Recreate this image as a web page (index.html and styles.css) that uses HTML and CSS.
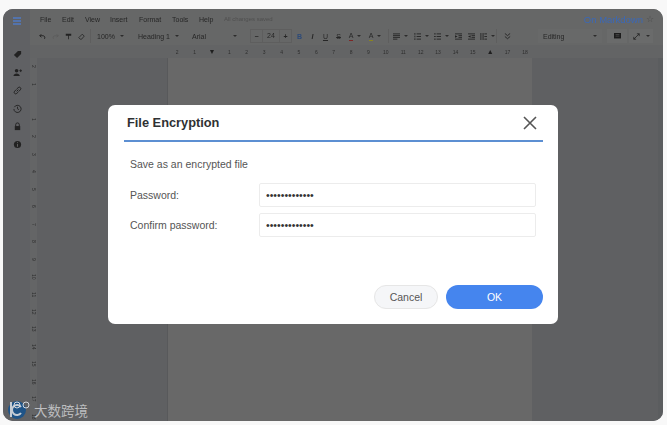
FILE: index.html
```html
<!DOCTYPE html>
<html lang="en">
<head>
    <meta charset="UTF-8">
    <meta name="viewport" content="width=device-width, initial-scale=1.0">
    <title>On Markdown - File Encryption</title>
    <link rel="stylesheet" href="styles.css">
</head>
<body>
    <div class="window">
        <div class="editor">
            <aside class="sidebar">
                <svg class="side-menu" width="10" height="8" viewBox="0 0 10 8"><path d="M1 1h8M1 4h8M1 7h8" stroke="#4f7ac4" stroke-width="1.400"/></svg>
                <div class="side-icons">
                    <svg viewBox="0 0 10 10"><path d="M1 5.500 5.500 1H9v3.500L4.500 9z" fill="#222"/></svg>
                    <svg viewBox="0 0 10 10"><circle cx="4" cy="3" r="2" fill="#222"/><path d="M0.500 9c0-4 7-4 7 0z" fill="#222"/><path d="M7 3h3M8.500 1.500v3" stroke="#222"/></svg>
                    <svg viewBox="0 0 10 10"><path d="M4 6 6 4M3.500 4 1.800 5.800a1.600 1.600 0 0 0 2.400 2.400L6 6.500M6.500 6l1.700-1.800a1.600 1.600 0 0 0-2.400-2.400L4 3.500" fill="none" stroke="#222" stroke-width="1.100"/></svg>
                    <svg viewBox="0 0 10 10"><path d="M1.500 3.500A4 4 0 1 1 1 5.500M5 3v2.300L6.600 6.300" fill="none" stroke="#222" stroke-width="1"/></svg>
                    <svg viewBox="0 0 10 10"><path d="M3 4.500V3a2 2 0 0 1 4 0v1.500" fill="none" stroke="#222" stroke-width="1.100"/><rect x="2" y="4.500" width="6" height="4.500" fill="#222"/></svg>
                    <svg viewBox="0 0 10 10"><circle cx="5" cy="5" r="4" fill="#222"/><path d="M5 4.500v3M5 2.500v1" stroke="#666"/></svg>
                </div>
            </aside>

            <div class="workspace">
                <header class="topbar">
                    <nav class="menubar">
                        <span class="menu-file">File</span>
                        <span class="menu-edit">Edit</span>
                        <span class="menu-view">View</span>
                        <span class="menu-insert">Insert</span>
                        <span class="menu-format">Format</span>
                        <span class="menu-tools">Tools</span>
                        <span class="menu-help">Help</span>
                        <span class="saved">All changes saved</span>
                        <span class="doc-name">On Markdown</span>
                        <span class="star">☆</span>
                    </nav>
                    <div class="toolbar">
                        <span class="tool w12"><svg viewBox="0 0 9 8"><path d="M3 1 1 3l2 2M1 3h4.500a2.500 2.500 0 0 1 1.500 4" fill="none" stroke="#222" stroke-width="1.200"/></svg></span>
                        <span class="tool w14"><svg viewBox="0 0 9 8"><path d="M6 1l2 2-2 2M8 3H3.500A2.500 2.500 0 0 0 2 7" fill="none" stroke="#5c5c5c" stroke-width="1"/></svg></span>
                        <span class="tool w12"><svg viewBox="0 0 9 9"><path d="M1 1h7v2.500H1zM4 3.500h1V8H4z" fill="#222"/></svg></span>
                        <span class="tool w14"><svg viewBox="0 0 9 9"><path d="M1 6 5.500 1.500 8 4 4.500 8H3z" fill="none" stroke="#222"/></svg></span>
                        <span class="tool-sep sep-a"></span>
                        <span class="select sel-zoom">100%<i class="caret"></i></span>
                        <span class="select sel-style">Heading 1<i class="caret"></i></span>
                        <span class="select sel-font">Arial<i class="caret"></i></span>
                        <span class="size-box"><b>−</b><em>24</em><b>+</b></span>
                        <span class="tool w13 bold">B</span>
                        <span class="tool w13 italic">I</span>
                        <span class="tool w13 under">U</span>
                        <span class="tool w13 strike">S</span>
                        <span class="tool w20"><span class="letter red">A</span><i class="caret"></i></span>
                        <span class="tool w20"><span class="letter yellow">A</span><i class="caret"></i></span>
                        <span class="tool-sep sep-b"></span>
                        <span class="tool w21"><svg viewBox="0 0 8 8"><path d="M0 1h8M0 3h8M0 5h8M0 7h5" stroke="#222"/></svg><i class="caret"></i></span>
                        <span class="tool w20"><svg viewBox="0 0 8 8"><path d="M3 1h5M3 4h5M3 7h5M1 0v2M1 3v2M1 6v2" stroke="#222"/></svg><i class="caret"></i></span>
                        <span class="tool w20"><svg viewBox="0 0 8 8"><path d="M3 1h5M3 4h5M3 7h5M0 1h2M0 4h2M0 7h2" stroke="#222"/></svg><i class="caret"></i></span>
                        <span class="tool w14"><svg viewBox="0 0 8 8"><path d="M0 1h8M0 7h8M4 3h4M4 5h4" stroke="#222"/><path d="M0 2.500 3 4 0 5.500z" fill="#222"/></svg></span>
                        <span class="tool w12"><svg viewBox="0 0 8 8"><path d="M0 1h8M0 7h8M4 3h4M4 5h4" stroke="#222"/><path d="M3 2.500 0 4l3 1.500z" fill="#222"/></svg></span>
                        <span class="tool w20"><svg viewBox="0 0 8 8"><path d="M1 0v8M3.500 0v8M5 1h3M5 4h3M5 7h3" stroke="#222"/></svg><i class="caret"></i></span>
                        <span class="tool-sep sep-c"></span>
                        <span class="tool w20"><svg viewBox="0 0 8 8"><path d="M1 0.500l3 2.500 3-2.500M1 4l3 2.500L7 4" fill="none" stroke="#222"/></svg></span>
                        <span class="select sel-mode">Editing<i class="caret"></i></span>
                        <span class="tool comment-btn"><svg viewBox="0 0 9 9"><path d="M0 0h9v7H0z" fill="#1c1c1c"/><path d="M2 2h5M2 4h5" stroke="#666" stroke-width=".7"/></svg></span>
                        <span class="tool expand-btn"><svg viewBox="0 0 9 9"><path d="M1 8 8 1M5 1h3v3M1 5v3h3" fill="none" stroke="#222"/></svg><i class="caret"></i></span>
                    </div>
                </header>

                <div class="ruler-top" id="rulerTop">
                    <span>2</span><span>1</span><span class="ruler-mark">▼</span><span>1</span><span>2</span><span>3</span><span>4</span><span>5</span><span>6</span><span>7</span><span>8</span><span>9</span><span>10</span><span>11</span><span>12</span><span>13</span><span>14</span><span>15</span><span class="ruler-end">▲</span><span>17</span><span>18</span>
                </div>

                <div class="canvas">
                    <div class="ruler-left">
                        <span>2</span><span>1</span><span></span><span>1</span><span>2</span><span>3</span><span>4</span><span>5</span><span>6</span><span>7</span><span>8</span><span>9</span><span>10</span><span>11</span><span>12</span><span>13</span><span>14</span><span>15</span><span>16</span><span>17</span><span>18</span>
                    </div>
                    <div class="page-area">
                        <div class="page"></div>
                    </div>
                    <div class="scrollbar"></div>
                </div>
            </div>
        </div>

        <div class="dialog">
            <div class="dialog-head">
                <h1>File Encryption</h1>
                <button class="close-btn" aria-label="Close">
                    <svg width="14" height="14" viewBox="0 0 14 14"><path d="M1 1l12 12M13 1 1 13" stroke="#555" stroke-width="1.600"/></svg>
                </button>
            </div>
            <div class="dialog-body">
                <p class="intro">Save as an encrypted file</p>
                <label class="field"><span>Password:</span><input type="password" value="1234567890123"></label>
                <label class="field"><span>Confirm password:</span><input type="password" value="1234567890123"></label>
            </div>
            <div class="dialog-foot">
                <button class="cancel-btn">Cancel</button>
                <button class="ok-btn">OK</button>
            </div>
        </div>

        <div class="watermark">
            <svg width="24" height="20" viewBox="0 0 24 20">
                <circle cx="10" cy="10" r="9" fill="#1f5488"/>
                <path d="M3 2v15h2V2z" fill="#c5ccd4"/>
                <path d="M14 13a5 5 0 1 1 0-6" fill="none" stroke="#c5ccd4" stroke-width="2"/>
                <circle cx="10" cy="5" r="3" fill="none" stroke="#d5d9de" stroke-width="1"/>
                <circle cx="19" cy="5" r="3" fill="none" stroke="#d5d9de" stroke-width="1"/>
            </svg>
            <span>大数跨境</span>
        </div>
    </div>
</body>
</html>
```

FILE: styles.css
```css
* {
    box-sizing: border-box;
    margin: 0;
    padding: 0;
}

body {
    font-family: "Liberation Sans", Arial, sans-serif;
    background-color: #f8f8f8;
    width: 667px;
    height: 425px;
    padding: 9px 4px 4px 3px;
    overflow: hidden;
}

.window {
    position: relative;
    height: 412px;
    border-radius: 10px;
    overflow: hidden;
    background-color: #5f6063;
}

.editor {
    display: flex;
    height: 100%;
    filter: blur(0.4px);
}

/* left icon strip */
.sidebar {
    width: 27px;
    flex-shrink: 0;
    display: flex;
    flex-direction: column;
    align-items: center;
    background-color: #606164;
}

.side-menu {
    margin-top: 8px;
}

.side-icons {
    display: flex;
    flex-direction: column;
    gap: 9px;
    margin-top: 25px;
    padding-left: 1px;
}

.side-icons svg {
    display: block;
    width: 9px;
    height: 9px;
}

.workspace {
    flex: 1;
    min-width: 0;
    display: flex;
    flex-direction: column;
}

.topbar {
    background-color: #666767;
    color: #262626;
    font-size: 7px;
}

.menubar {
    display: flex;
    align-items: center;
    height: 18px;
    padding-top: 2px;
    padding-left: 10px;
}

.menu-file { width: 22px; }
.menu-edit { width: 23px; }
.menu-view { width: 25px; }
.menu-insert { width: 29px; }
.menu-format { width: 33px; }
.menu-tools { width: 27px; }
.menu-help { width: 25px; }

.saved {
    color: #4f4f4f;
    font-size: 6px;
}

.doc-name {
    margin-left: auto;
    font-size: 9.5px;
    color: #3a68b8;
}

.star {
    width: 20px;
    padding-left: 3px;
    font-size: 9px;
    color: #4c4c4c;
}

.toolbar {
    display: flex;
    align-items: center;
    height: 18px;
    padding-left: 6px;
}

.tool {
    display: flex;
    align-items: center;
    justify-content: center;
    flex-shrink: 0;
    gap: 4px;
    font-size: 7px;
}

.tool svg {
    display: block;
    width: 7px;
    height: 7px;
}

.w12 { width: 12px; }
.w13 { width: 13px; }
.w14 { width: 14px; }
.w20 { width: 20px; }
.w21 { width: 21px; }

.bold { font-weight: bold; color: #2d4a78; }
.italic { font-style: italic; font-weight: bold; }
.under { text-decoration: underline; }
.strike { text-decoration: line-through; }

.letter {
    display: block;
    line-height: 7px;
    padding-bottom: 1px;
    border-bottom: 1px solid;
}

.red { border-color: #7d2626; }
.yellow { border-color: #8a8420; }

.caret {
    display: block;
    width: 0;
    height: 0;
    border-left: 2px solid transparent;
    border-right: 2px solid transparent;
    border-top: 2px solid #2c2c2c;
}

.tool-sep {
    width: 1px;
    height: 14px;
    background-color: #5e5e5e;
    flex-shrink: 0;
}

.sep-a { margin: 0 1px 0 2px; }
.sep-b { margin: 0 1px 0 3px; }
.sep-c { margin: 0 0 0 -1px; }

.select {
    display: flex;
    align-items: center;
    justify-content: space-between;
    flex-shrink: 0;
    height: 14px;
}

.sel-zoom { width: 36px; padding: 0 4px 0 5px; }
.sel-style { width: 56px; padding: 0 5px 0 10px; }
.sel-font { width: 58px; padding: 0 5px 0 8px; }

.sel-mode {
    width: 64px;
    margin-left: 21px;
    padding: 0 5px;
    background-color: #686969;
}

.size-box {
    display: flex;
    align-items: center;
    justify-content: space-between;
    width: 42px;
    height: 14px;
    margin: 0 1px 0 8px;
    border: 1px solid #5e5e5e;
    flex-shrink: 0;
}

.size-box b {
    width: 11px;
    text-align: center;
    font-weight: bold;
}

.size-box em {
    flex: 1;
    height: 100%;
    line-height: 12px;
    text-align: center;
    font-style: normal;
    border-left: 1px solid #5e5e5e;
    border-right: 1px solid #5e5e5e;
}

.comment-btn {
    width: 20px;
    height: 14px;
    margin-left: 5px;
    background-color: #6a6b6b;
}

.expand-btn {
    width: 24px;
    height: 14px;
    margin-left: 2px;
    gap: 6px;
    background-color: #6a6b6b;
}

.ruler-top {
    display: flex;
    align-items: center;
    height: 13px;
    padding-left: 138.5px;
    background-color: #636465;
    color: #2e2e2e;
    font-size: 5px;
}

.ruler-top span {
    width: 17.4px;
    text-align: center;
    flex-shrink: 0;
}

.ruler-top .ruler-mark,
.ruler-top .ruler-end {
    font-size: 7px;
    color: #1f1f1f;
}

.canvas {
    flex: 1;
    min-height: 0;
    display: flex;
    background-color: #5f6062;
}

.ruler-left {
    width: 7px;
    flex-shrink: 0;
    display: flex;
    flex-direction: column;
    background-color: #646566;
    color: #2e2e2e;
    font-size: 5px;
    line-height: 7px;
}

.ruler-left span {
    height: 17.5px;
    flex-shrink: 0;
    writing-mode: vertical-rl;
    text-align: center;
}

.page-area {
    flex: 1;
    padding-left: 131px;
    padding-right: 126px;
}

.page {
    height: 100%;
    background-color: #686868;
    box-shadow: -1px 0 0 #58595b;
}

.scrollbar {
    width: 5px;
    flex-shrink: 0;
    background-color: #5b5d5f;
}

/* modal */
.dialog {
    position: absolute;
    left: 105px;
    top: 96px;
    width: 450px;
    height: 219px;
    display: flex;
    flex-direction: column;
    background-color: #fff;
    border-radius: 7px;
    padding: 0 15px 15px 16px;
}

.dialog-head {
    display: flex;
    align-items: center;
    justify-content: space-between;
    height: 37px;
    border-bottom: 2px solid #5c8fd2;
    padding: 0 6px 0 3px;
}

.dialog-head h1 {
    font-size: 12.8px;
    font-weight: bold;
    color: #2f3133;
}

.close-btn {
    background: none;
    border: none;
    width: 14px;
    height: 14px;
    cursor: pointer;
}

.close-btn svg {
    display: block;
}

.dialog-body {
    flex: 1;
    padding: 16px 7px 0 6px;
    color: #555;
    font-size: 10.5px;
}

.intro {
    line-height: 13px;
    margin-bottom: 12px;
}

.field {
    display: flex;
    align-items: center;
    height: 24px;
    margin-bottom: 6px;
}

.field span {
    width: 129px;
    flex-shrink: 0;
}

.field input {
    flex: 1;
    height: 100%;
    min-width: 0;
    padding: 0 6px;
    border: 1px solid #ececec;
    border-radius: 2px;
    font-family: "Liberation Sans", Arial, sans-serif;
    font-size: 10.5px;
    color: #333;
    outline: none;
}

.dialog-foot {
    display: flex;
    justify-content: flex-end;
    gap: 8px;
}

.dialog-foot button {
    height: 24px;
    border-radius: 12px;
    font-family: "Liberation Sans", Arial, sans-serif;
    font-size: 10.5px;
    cursor: pointer;
}

.cancel-btn {
    width: 64px;
    background-color: #f5f6f8;
    border: 1px solid #e6e6e6;
    color: #555;
}

.ok-btn {
    width: 97px;
    background-color: #4585ee;
    border: none;
    color: #fff;
}

.watermark {
    position: absolute;
    left: 4px;
    bottom: 1px;
    display: flex;
    align-items: center;
    gap: 3px;
    color: #bcbdbf;
    font-family: "Noto Sans CJK SC", sans-serif;
    font-size: 13.5px;
    line-height: 20px;
}
```
